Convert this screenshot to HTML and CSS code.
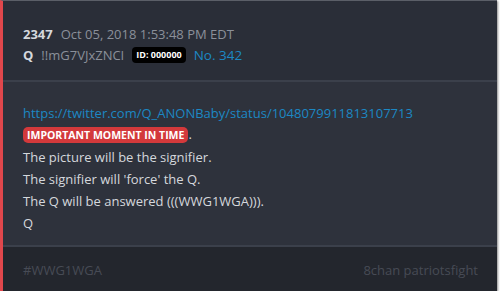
FILE: index.html
```html
<!DOCTYPE html>
<html>
<head>
    <title>Q Drop 2347</title>
    <link rel="stylesheet" href="styles.css">
</head>
<body>
    <div class="post">
        <div class="post-header">
            <div class="meta-row">
                <span class="post-num">2347</span>
                <span class="post-date">Oct 05, 2018 1:53:48 PM EDT</span>
            </div>
            <div class="meta-row">
                <span class="author">Q</span>
                <span class="trip">!!mG7VJxZNCI</span>
                <span class="id-badge">ID: 000000</span>
                <a class="post-link" href="#">No. 342</a>
            </div>
        </div>

        <div class="post-body">
            <a class="ref-link" href="#">https://twitter.com/Q_ANONBaby/status/1048079911813107713</a>
            <p><span class="highlight">IMPORTANT MOMENT IN TIME</span>.</p>
            <p>The picture will be the signifier.</p>
            <p>The signifier will 'force' the Q.</p>
            <p>The Q will be answered (((WWG1WGA))).</p>
            <p>Q</p>
        </div>

        <div class="post-footer">
            <span>#WWG1WGA</span>
            <span>8chan patriotsfight</span>
        </div>
    </div>
</body>
</html>
```

FILE: styles.css
```css
body {
    margin: 0;
    background: #ffffff;
    font-family: 'Open Sans', sans-serif;
    font-size: 13px;
}
.post {
    width: 494px;
    border-left: 3px solid #e0474c;
    border-top: 1px solid #5b5f68;
    box-shadow: 1px 1px 2px rgba(0, 0, 0, 0.45);
    background: #2e323c;
}
.post-header {
    background: #2a2e38;
    padding: 22px 20px 8px;
    border-bottom: 2px solid #3b404b;
    height: 49px;
}
.meta-row {
    display: flex;
    align-items: center;
    gap: 8px;
    height: 21px;
}
.post-num,
.author {
    color: #d5d8dd;
    font-weight: bold;
}
.post-date,
.trip {
    color: #8b909a;
}
.id-badge {
    background: #000000;
    color: #ffffff;
    font-weight: bold;
    font-size: 9px;
    padding: 2px 4px;
    border-radius: 4px;
    line-height: 12px;
}
.post-link {
    color: #1c88c4;
    text-decoration: none;
    font-size: 13.5px;
}
.post-body {
    padding: 22px 20px 12px;
    color: #d5d8dd;
    height: 129px;
}
.post-body p {
    margin: 0;
    line-height: 22px;
}
.ref-link {
    display: block;
    color: #1c88c4;
    text-decoration: none;
    line-height: 19px;
}
.highlight {
    background: #d3393b;
    color: #ffffff;
    font-weight: bold;
    font-size: 10.5px;
    padding: 1px 4px;
    border-radius: 5px;
}
.post-footer {
    background: #23262d;
    border-top: 2px solid #3b404b;
    display: flex;
    justify-content: space-between;
    align-items: center;
    padding: 2px 19px 0 20px;
    height: 42px;
    color: #474b55;
}
```
